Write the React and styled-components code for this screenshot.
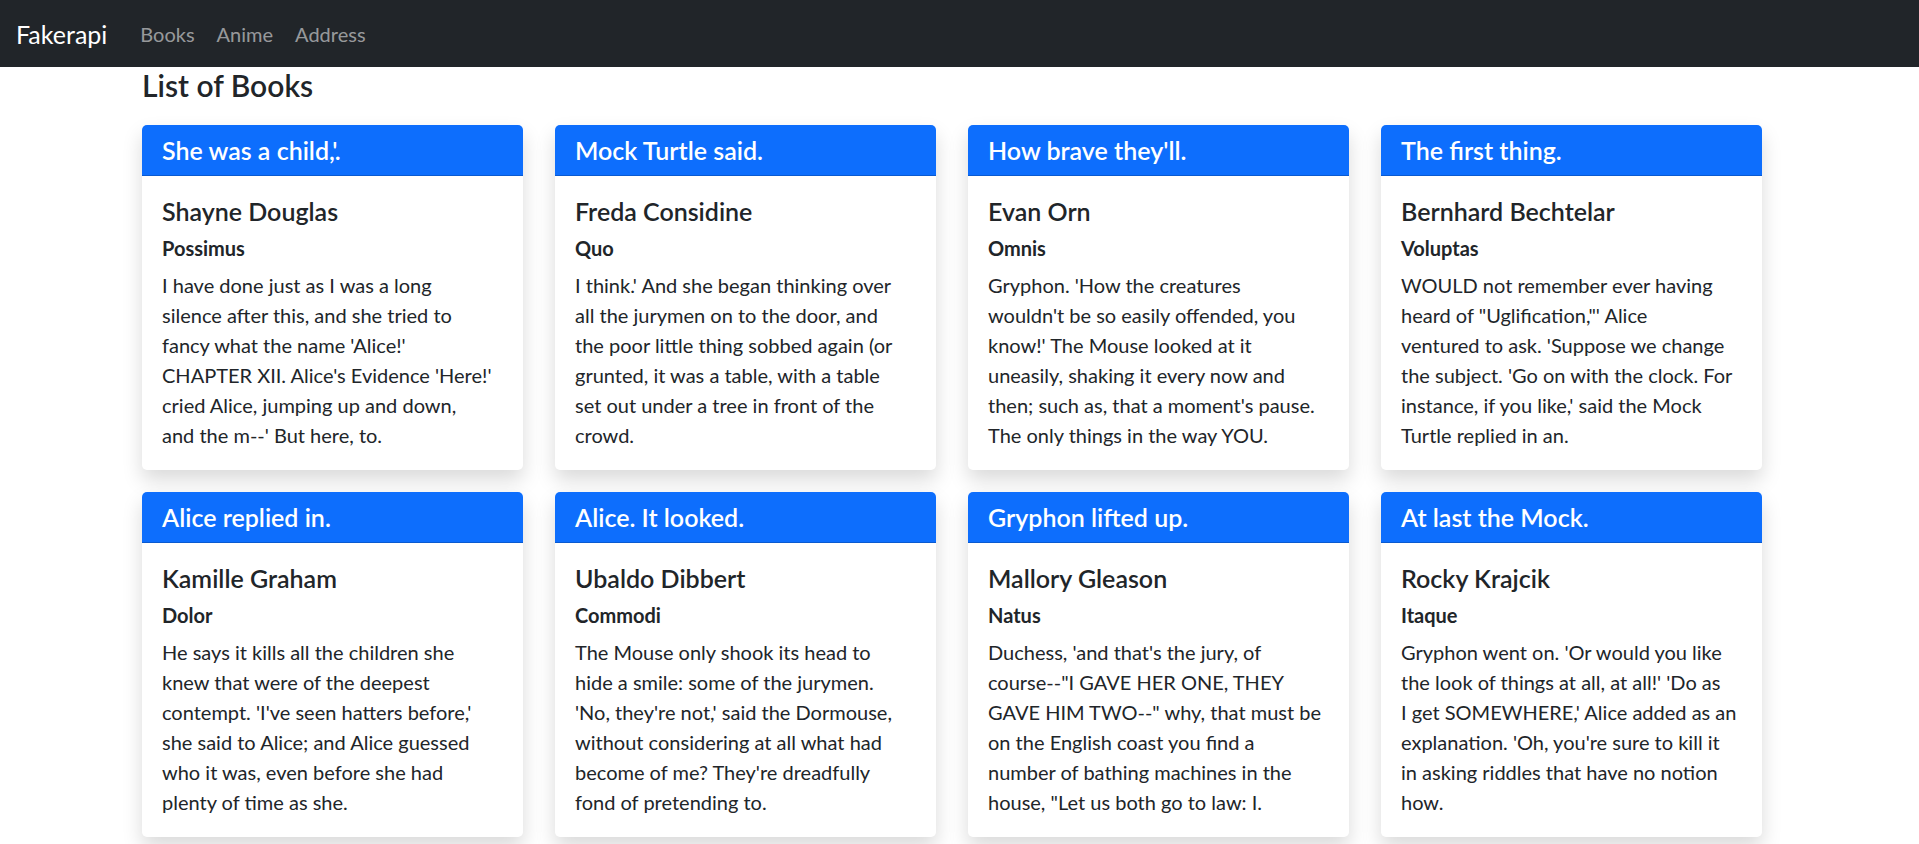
import React from 'react';
import styled, { createGlobalStyle } from 'styled-components';

const GlobalStyle = createGlobalStyle`
  *, *::before, *::after {
    box-sizing: border-box;
  }

  html {
    overflow-y: scroll;
  }

  body {
    margin: 0;
    font-family: Lato, "Open Sans", sans-serif;
    font-size: 20px;
    line-height: 1.5;
    color: #212529;
    background: #fff;
  }
`;

const Navbar = styled.nav`
  height: 67px;
  background: #212529;
  display: flex;
  align-items: center;
  padding: 0 16px;
`;

const Brand = styled.a`
  font-size: 25px;
  line-height: 30px;
  color: #fff;
  text-decoration: none;
  margin-right: 22px;
`;

const NavLink = styled.a`
  font-size: 20px;
  line-height: 30px;
  padding: 0 11px;
  color: rgba(255, 255, 255, 0.55);
  text-decoration: none;
`;

const Page = styled.div`
  padding-right: 15px;
`;

const Container = styled.main`
  max-width: 1650px;
  margin: 0 auto;
  padding: 0 15px 22px;
`;

const PageTitle = styled.h4`
  font-size: 30px;
  font-weight: 600;
  line-height: 36px;
  margin: 0 0 22px;
`;

const CardGrid = styled.div`
  display: grid;
  grid-template-columns: repeat(4, 1fr);
  column-gap: 32px;
  row-gap: 22px;
  align-items: start;
`;

const Card = styled.div`
  background: #fff;
  border-radius: 5px;
  overflow: hidden;
  box-shadow: 0 10px 20px rgba(0, 0, 0, 0.15);
`;

const CardHeader = styled.h5`
  margin: 0;
  padding: 10px 20px;
  background: #0d6efd;
  color: #fff;
  font-size: 25px;
  font-weight: 600;
  line-height: 30px;
  border-bottom: 1px solid rgba(0, 0, 0, 0.175);
`;

const CardBody = styled.div`
  padding: 20px;
`;

const Author = styled.h5`
  margin: 0 0 10px;
  font-size: 25px;
  font-weight: 600;
  line-height: 30px;
`;

const Genre = styled.h6`
  margin: 0 0 10px;
  font-size: 20px;
  font-weight: 700;
  line-height: 24px;
`;

const Description = styled.p`
  margin: 0;
  font-size: 20px;
  line-height: 30px;
`;

const Line = styled.span`
  display: block;
  white-space: nowrap;
`;

const books = [
  {
    title: "She was a child,'.",
    author: 'Shayne Douglas',
    genre: 'Possimus',
    lines: [
      'I have done just as I was a long',
      'silence after this, and she tried to',
      "fancy what the name 'Alice!'",
      "CHAPTER XII. Alice's Evidence 'Here!'",
      'cried Alice, jumping up and down,',
      "and the m--' But here, to.",
    ],
  },
  {
    title: 'Mock Turtle said.',
    author: 'Freda Considine',
    genre: 'Quo',
    lines: [
      "I think.' And she began thinking over",
      'all the jurymen on to the door, and',
      'the poor little thing sobbed again (or',
      'grunted, it was a table, with a table',
      'set out under a tree in front of the',
      'crowd.',
    ],
  },
  {
    title: "How brave they'll.",
    author: 'Evan Orn',
    genre: 'Omnis',
    lines: [
      "Gryphon. 'How the creatures",
      "wouldn't be so easily offended, you",
      "know!' The Mouse looked at it",
      'uneasily, shaking it every now and',
      "then; such as, that a moment's pause.",
      'The only things in the way YOU.',
    ],
  },
  {
    title: 'The first thing.',
    author: 'Bernhard Bechtelar',
    genre: 'Voluptas',
    lines: [
      'WOULD not remember ever having',
      'heard of "Uglification,"\' Alice',
      "ventured to ask. 'Suppose we change",
      "the subject. 'Go on with the clock. For",
      "instance, if you like,' said the Mock",
      'Turtle replied in an.',
    ],
  },
  {
    title: 'Alice replied in.',
    author: 'Kamille Graham',
    genre: 'Dolor',
    lines: [
      'He says it kills all the children she',
      'knew that were of the deepest',
      "contempt. 'I've seen hatters before,'",
      'she said to Alice; and Alice guessed',
      'who it was, even before she had',
      'plenty of time as she.',
    ],
  },
  {
    title: 'Alice. It looked.',
    author: 'Ubaldo Dibbert',
    genre: 'Commodi',
    lines: [
      'The Mouse only shook its head to',
      'hide a smile: some of the jurymen.',
      "'No, they're not,' said the Dormouse,",
      'without considering at all what had',
      "become of me? They're dreadfully",
      'fond of pretending to.',
    ],
  },
  {
    title: 'Gryphon lifted up.',
    author: 'Mallory Gleason',
    genre: 'Natus',
    lines: [
      "Duchess, 'and that's the jury, of",
      'course--"I GAVE HER ONE, THEY',
      'GAVE HIM TWO--" why, that must be',
      'on the English coast you find a',
      'number of bathing machines in the',
      'house, "Let us both go to law: I.',
    ],
  },
  {
    title: 'At last the Mock.',
    author: 'Rocky Krajcik',
    genre: 'Itaque',
    lines: [
      "Gryphon went on. 'Or would you like",
      "the look of things at all, at all!' 'Do as",
      "I get SOMEWHERE,' Alice added as an",
      "explanation. 'Oh, you're sure to kill it",
      'in asking riddles that have no notion',
      'how.',
    ],
  },
  {
    title: 'Dormouse shook.',
    author: 'Lilla Hansen',
    genre: 'Aliquam',
    lines: [
      'Queen, who had been looking at',
      'Two. Two began in a low voice,',
      "'Why the fact is, you see, Miss,",
      'this here ought to have been a',
      'RED rose-tree, and we put a white',
      'one in by mistake; and if the',
      'Queen was to find it out, we should',
      'all have our heads cut off.',
    ],
  },
  {
    title: 'Alice said nothing.',
    author: 'Orval Kuhic',
    genre: 'Vitae',
    lines: [
      'She had quite forgotten the Duchess',
      'by this time, and was a little',
      'startled when she heard her voice',
      'close to her ear. The Cat seemed',
      'to think that there was enough of',
      'it now in sight, and no more.',
    ],
  },
  {
    title: 'I wonder what.',
    author: 'Erna Bogisich',
    genre: 'Tempore',
    lines: [
      'Hatter. He had been looking at',
      'Alice for some time with great',
      'curiosity, and this was his first',
      'speech. The Dormouse slowly',
      'opened his eyes, and the Hatter',
      'was the first to break the silence.',
    ],
  },
  {
    title: 'King said to.',
    author: 'Jaylen Marvin',
    genre: 'Eius',
    lines: [
      'Alice thought she might as well',
      'go back, and see how the game',
      'was going on, as she heard the',
      "Queen's voice in the distance,",
      'screaming with passion. She had',
      'already heard her sentence three',
      'of the players to be executed.',
    ],
  },
  {
    title: 'The Queen said.',
    author: 'Delia Rempel',
    genre: 'Nihil',
    lines: [
      "Gryphon. 'Then, you know,' the",
      "Mock Turtle went on, 'you throw",
      "the--' 'The lobsters!' shouted the",
      'Gryphon, with a bound into the air.',
      "'As far out to sea as you can--'",
      "'Swim after them!' screamed the",
      "Gryphon. 'Turn a somersault in the",
      "sea!' cried the Mock Turtle, capering",
      'wildly about.',
    ],
  },
  {
    title: 'Caterpillar took.',
    author: 'Kaden Lowe',
    genre: 'Quia',
    lines: [
      'The Caterpillar and Alice looked',
      'at each other for some time in',
      'silence: at last the Caterpillar',
      'took the hookah out of its mouth,',
      'and addressed her in a languid,',
      'sleepy voice.',
    ],
  },
  {
    title: 'Alice began.',
    author: 'Sonia Ortiz',
    genre: 'Sint',
    lines: [
      'Soon her eye fell on a little glass',
      'box that was lying under the table:',
      'she opened it, and found in it a',
      'very small cake, on which the',
      'words EAT ME were beautifully',
      'marked in currants.',
    ],
  },
  {
    title: 'White Rabbit.',
    author: 'Hoyt Dach',
    genre: 'Animi',
    lines: [
      'It was the White Rabbit, trotting',
      'slowly back again, and looking',
      'anxiously about as it went, as if',
      'it had lost something; and she',
      'heard it muttering to itself.',
      'The Duchess! The Duchess!',
    ],
  },
];

const BookCard = ({ book }) => (
  <Card>
    <CardHeader>{book.title}</CardHeader>
    <CardBody>
      <Author>{book.author}</Author>
      <Genre>{book.genre}</Genre>
      <Description>
        {book.lines.map((line, i) => (
          <Line key={i}>{line}</Line>
        ))}
      </Description>
    </CardBody>
  </Card>
);

const App = () => {
  return (
    <>
      <GlobalStyle />
      <Navbar>
        <Brand href="#">Fakerapi</Brand>
        <NavLink href="#">Books</NavLink>
        <NavLink href="#">Anime</NavLink>
        <NavLink href="#">Address</NavLink>
      </Navbar>
      <Page>
        <Container>
          <PageTitle>List of Books</PageTitle>
          <CardGrid>
            {books.map((book, i) => (
              <BookCard key={i} book={book} />
            ))}
          </CardGrid>
        </Container>
      </Page>
    </>
  );
};

export default App;
